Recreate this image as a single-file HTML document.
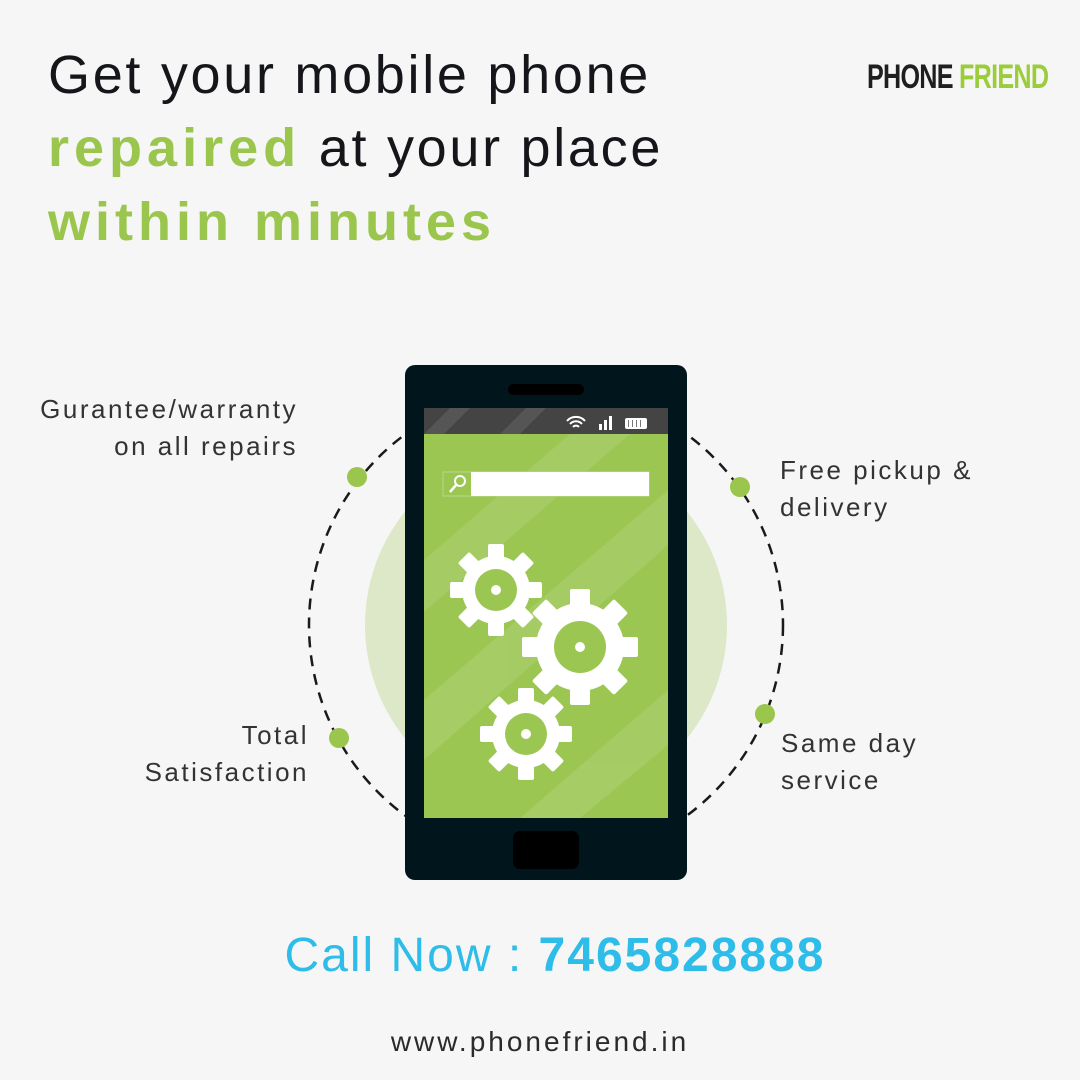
<!DOCTYPE html>
<html><head><meta charset="utf-8"><style>
body{margin:0;width:1080px;height:1080px;background:#f6f6f6;font-family:"Liberation Sans",sans-serif;position:relative;overflow:hidden}
.t{position:absolute;white-space:nowrap}
.h{left:48px;font-size:54px;color:#14161a;letter-spacing:2.7px}
.g{color:#9bc64e;font-weight:bold;letter-spacing:5px}
.f{font-size:26px;color:#333;line-height:37px;letter-spacing:2.5px}
</style></head><body>
<div class="t h" style="top:44px">Get your mobile phone</div>
<div class="t h" style="top:117px"><span class="g">repaired</span> at your place</div>
<div class="t h g" style="top:191px">within minutes</div>
<div class="t" style="left:867px;top:58px;font-size:34px;font-weight:bold;letter-spacing:-1px;transform:scaleX(0.74);transform-origin:left"><span style="color:#1f1f1f">PHONE</span> <span style="color:#9bcc3a">FRIEND</span></div>

<svg width="1080" height="1080" style="position:absolute;left:0;top:0">
<circle cx="546" cy="625" r="181" fill="#dde8c8"/>
<circle cx="546" cy="625" r="237" fill="none" stroke="#1a1a1a" stroke-width="2.5" stroke-dasharray="11 8"/>
<g fill="#9bc64e"><circle cx="357" cy="477" r="10"/><circle cx="740" cy="487" r="10"/><circle cx="339" cy="738" r="10"/><circle cx="765" cy="714" r="10"/></g>
<rect x="405" y="365" width="282" height="515" rx="10" fill="#01161c"/>
<rect x="508" y="384" width="76" height="11" rx="5.5" fill="#000"/>
<rect x="513" y="831" width="66" height="38" rx="7" fill="#000"/>
<clipPath id="sc"><rect x="424" y="408" width="244" height="410"/></clipPath>
<g clip-path="url(#sc)">
<rect x="424" y="408" width="244" height="410" fill="#9bc652"/>
<g fill="#a8cd6a" opacity="0.8">
<polygon points="424,560 600,408 660,408 424,612"/>
<polygon points="424,700 668,490 668,545 424,760"/>
<polygon points="520,818 668,690 668,745 580,818"/>
</g>
<rect x="424" y="408" width="244" height="26" fill="#444"/>
<polygon points="424,434 450,408 470,408 444,434" fill="#555"/>
<polygon points="500,434 526,408 546,408 520,434" fill="#555"/>
</g>
<g fill="none" stroke="#fff" stroke-width="2"><path d="M567 421a12 12 0 0 1 18 0M570 424a8 8 0 0 1 12 0M573 427a4 4 0 0 1 6 0"/></g>
<g fill="#fff"><rect x="599" y="424" width="3" height="6"/><rect x="604" y="420" width="3" height="10"/><rect x="609" y="416" width="3" height="14"/>
<rect x="625" y="418" width="22" height="11" rx="2"/></g>
<g fill="#777"><rect x="628" y="420" width="1" height="7"/><rect x="632" y="420" width="1" height="7"/><rect x="636" y="420" width="1" height="7"/><rect x="640" y="420" width="1" height="7"/></g>
<rect x="443" y="472" width="206" height="24" fill="none" stroke="#b9d88a" stroke-width="1"/>
<rect x="471" y="472" width="178" height="24" fill="#fff"/>
<circle cx="460" cy="481" r="5" fill="none" stroke="#fff" stroke-width="2"/><line x1="456" y1="485" x2="450" y2="492" stroke="#fff" stroke-width="2.5"/>
<g fill="#fff">
<g transform="translate(496,590)"><circle r="34"/><g id="t1"><rect x="-8" y="-46" width="16" height="92" rx="2"/><rect x="-46" y="-8" width="92" height="16" rx="2"/></g><use href="#t1" transform="rotate(45)"/></g>
<g transform="translate(580,647)"><circle r="44"/><g id="t2"><rect x="-10" y="-58" width="20" height="116" rx="2"/><rect x="-58" y="-10" width="116" height="20" rx="2"/></g><use href="#t2" transform="rotate(45)"/></g>
<g transform="translate(526,734)"><circle r="34"/><use href="#t1"/><use href="#t1" transform="rotate(45)"/></g>
</g>
<g fill="#9bc652"><circle cx="496" cy="590" r="21"/><circle cx="580" cy="647" r="26"/><circle cx="526" cy="734" r="21"/></g>
<g fill="#fff"><circle cx="496" cy="590" r="5"/><circle cx="580" cy="647" r="5"/><circle cx="526" cy="734" r="5"/></g>
</svg>

<div class="t f" style="right:782px;top:391px;text-align:right">Gurantee/warranty<br>on all repairs</div>
<div class="t f" style="left:780px;top:452px">Free pickup &amp;<br>delivery</div>
<div class="t f" style="right:771px;top:717px;text-align:right">Total<br>Satisfaction</div>
<div class="t f" style="left:781px;top:725px">Same day<br>service</div>
<div class="t" style="left:0;width:1110px;text-align:center;top:928px;font-size:48px;color:#2dbde8;letter-spacing:2px">Call Now : <b>7465828888</b></div>
<div class="t" style="left:0;width:1080px;text-align:center;top:1026px;font-size:28px;color:#2a2a2a;letter-spacing:3px">www.phonefriend.in</div>
</body></html>
